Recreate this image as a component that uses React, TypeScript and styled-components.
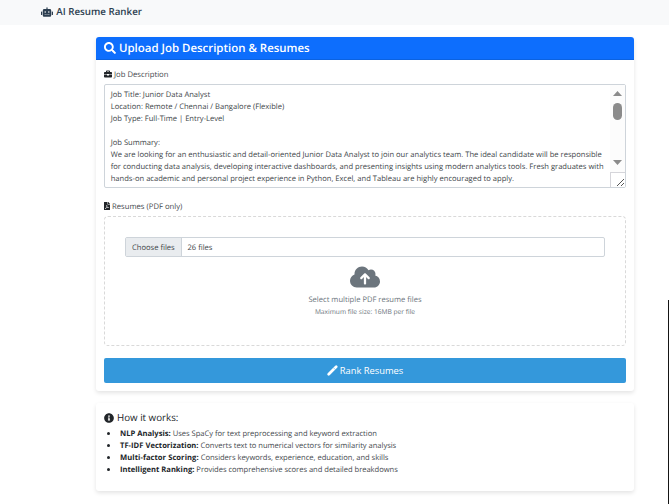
import React from 'react';
import styled, { createGlobalStyle } from 'styled-components';
import { FaRobot, FaSearch, FaBriefcase, FaFilePdf, FaInfoCircle } from 'react-icons/fa';
import { FaCloudArrowUp } from 'react-icons/fa6';

const GlobalStyle = createGlobalStyle`
  * { box-sizing: border-box; }
  body {
    margin: 0;
    background: #fff;
    color: #212529;
    font: 400 7.6px/12px "Open Sans", "Noto Sans", sans-serif;
    text-rendering: geometricPrecision;
    overflow: hidden;
  }
  svg { flex: none; }
`;

const Page = styled.div`
  position: relative;
  height: 504px;
`;

const WindowEdge = styled.div`
  position: absolute;
  right: 0;
  top: 300px;
  bottom: 0;
  width: 1px;
  background: #151515;
`;

const Navbar = styled.nav`
  display: flex;
  align-items: center;
  gap: 3.3px;
  height: 25px;
  padding: 0 0 1px 41px;
  background: #f8f9fa;
  color: #2c3e50;
  font-size: 9.75px;
  font-weight: 600;
`;

const Main = styled.main`
  display: flex;
  flex-direction: column;
  gap: 12px;
  width: 538px;
  margin: 12px 0 0 96px;
`;

const Card = styled.section<{ $height: number }>`
  height: ${(p) => p.$height}px;
  border-radius: 3px;
  background: #fff;
  box-shadow: 0 2px 4px rgba(0, 0, 0, 0.11);
`;

const CardHeader = styled.h1`
  display: flex;
  align-items: center;
  gap: 3px;
  height: 23px;
  margin: 0;
  padding: 2px 8px 0;
  border-bottom: 1px solid #0b62e0;
  border-radius: 3px 3px 0 0;
  background: #0d6efd;
  color: #fff;
  font-size: 11.45px;
  font-weight: 600;

  svg { margin-bottom: 2px; }
`;

const CardBody = styled.div`
  padding: 8px;
`;

const Label = styled.label`
  display: flex;
  align-items: center;
  gap: 2px;
  height: 12px;
  margin-bottom: 4px;
  padding-top: 1px;
  color: #45494e;
  font-size: 7.7px;

  svg {
    margin-bottom: 1px;
    color: #212529;
  }
`;

const PdfIcon = styled(FaFilePdf)`
  width: 6px;
  height: 8px;
`;

const TextBox = styled.div`
  display: grid;
  grid-template-columns: 1fr 15px;
  height: 104px;
  margin-bottom: 12px;
  border: 1px solid #ced4da;
  border-radius: 2px;
`;

const TextContent = styled.div`
  padding: 4px 0 0 5.7px;
  color: #404549;
  white-space: pre;
  overflow: hidden;
`;

const ScrollColumn = styled.div`
  display: flex;
  flex-direction: column;
  align-items: center;
  background: #fcfcfc;
`;

const Arrow = styled.div<{ $down?: boolean }>`
  width: 9px;
  height: 5px;
  margin-top: ${(p) => (p.$down ? 40 : 6)}px;
  background: #8b8b8b;
  clip-path: ${(p) => (p.$down ? 'polygon(0 0, 100% 0, 50% 100%)' : 'polygon(50% 0, 100% 100%, 0 100%)')};
`;

const Thumb = styled.div`
  width: 9px;
  height: 17px;
  margin-top: 7px;
  border-radius: 5px;
  background: #8b8b8b;
`;

const Resizer = styled.div`
  display: flex;
  align-items: flex-end;
  justify-content: flex-end;
  width: 15px;
  height: 15px;
  margin-top: auto;
  border-top: 1px solid #d5d5da;
  border-left: 1px solid #d5d5da;
  background: #fff;
`;

const DropZone = styled.div`
  display: flex;
  flex-direction: column;
  align-items: center;
  height: 130px;
  margin-bottom: 12px;
  padding: 20px;
  border: 1px dashed #d9d9d9;
  border-radius: 4px;
  color: #6c757d;
`;

const FileInput = styled.div`
  display: flex;
  align-self: stretch;
  height: 20px;
  margin-bottom: 5px;
  border: 1px solid #ced4da;
  border-radius: 2px;
  line-height: 20px;
  color: #404549;
`;

const FileButton = styled.span`
  height: 18px;
  width: 56px;
  padding-left: 6px;
  border-right: 1px solid #ced4da;
  background: #e9ecef;
`;

const FileCount = styled.span`
  padding-left: 5.5px;
`;

const Hint = styled.p`
  margin: 2px 0 0;
`;

const SmallHint = styled.small`
  font-size: 6.65px;
`;

const RankButton = styled.button`
  display: flex;
  align-items: center;
  justify-content: center;
  gap: 2px;
  width: 100%;
  height: 25px;
  padding: 0;
  border: 0;
  border-radius: 2px;
  background: #3498db;
  color: #fff;
  font: 400 9.35px/14px "Open Sans", "Noto Sans", sans-serif;
`;

const InfoTitle = styled.h2`
  display: flex;
  align-items: center;
  gap: 3px;
  height: 12px;
  margin: 0 0 5px;
  padding-top: 2px;
  font-size: 9.75px;
  font-weight: 500;

  svg { margin-bottom: 1px; }
`;

const InfoList = styled.ul`
  margin: 0;
  padding: 0;
  list-style: none;
  color: #45494e;
`;

const InfoItem = styled.li`
  display: flex;
  align-items: center;
  gap: 2px;
  height: 12px;
  letter-spacing: -0.035px;

  &::before {
    content: '';
    width: 3px;
    height: 3px;
    margin: 0 8px 2px 3px;
    border-radius: 50%;
    background: #212529;
  }
`;

const Term = styled.strong<{ $spacing?: number }>`
  color: #212529;
  font-weight: 700;
  letter-spacing: ${(p) => p.$spacing ?? 0}px;
`;

const jobText = `Job Title: Junior Data Analyst
Location: Remote / Chennai / Bangalore (Flexible)
Job Type: Full-Time | Entry-Level

Job Summary:
We are looking for an enthusiastic and detail-oriented Junior Data Analyst to join our analytics team. The ideal candidate will be responsible
for conducting data analysis, developing interactive dashboards, and presenting insights using modern analytics tools. Fresh graduates with
hands-on academic and personal project experience in Python, Excel, and Tableau are highly encouraged to apply.`;

const steps = [
  { term: 'NLP Analysis:', text: 'Uses SpaCy for text preprocessing and keyword extraction' },
  { term: 'TF-IDF Vectorization:', text: 'Converts text to numerical vectors for similarity analysis', spacing: 0.02 },
  { term: 'Multi-factor Scoring:', text: 'Considers keywords, experience, education, and skills', spacing: 0.06 },
  { term: 'Intelligent Ranking:', text: 'Provides comprehensive scores and detailed breakdowns' },
];

export default function App() {
  return (
    <Page>
      <GlobalStyle />
      <Navbar>
        <FaRobot size={12} />
        AI Resume Ranker
      </Navbar>
      <Main>
        <Card $height={354}>
          <CardHeader>
            <FaSearch size={12} />
            Upload Job Description &amp; Resumes
          </CardHeader>
          <CardBody>
            <Label>
              <FaBriefcase size={8} />
              Job Description
            </Label>
            <TextBox>
              <TextContent>{jobText}</TextContent>
              <ScrollColumn>
                <Arrow />
                <Thumb />
                <Arrow $down />
                <Resizer>
                  <svg width="9" height="9" viewBox="0 0 9 9" stroke="#444" strokeWidth="0.9">
                    <path d="M1 8 8 1M5 8 8 5" />
                  </svg>
                </Resizer>
              </ScrollColumn>
            </TextBox>
            <Label>
              <PdfIcon />
              Resumes (PDF only)
            </Label>
            <DropZone>
              <FileInput>
                <FileButton>Choose files</FileButton>
                <FileCount>26 files</FileCount>
              </FileInput>
              <FaCloudArrowUp size={30} />
              <Hint>Select multiple PDF resume files</Hint>
              <SmallHint>Maximum file size: 16MB per file</SmallHint>
            </DropZone>
            <RankButton>
              <svg width="11" height="11" viewBox="0 0 11 11" stroke="#fff" strokeLinecap="round">
                <path d="M1.7 9.3 9.2 1.8" strokeWidth="2.7" />
                <path d="M6.6 2.9 8.1 4.4" stroke="#3498db" strokeWidth="0.5" />
              </svg>
              Rank Resumes
            </RankButton>
          </CardBody>
        </Card>
        <Card $height={88}>
          <CardBody>
            <InfoTitle>
              <FaInfoCircle size={10} />
              How it works:
            </InfoTitle>
            <InfoList>
              {steps.map((s) => (
                <InfoItem key={s.term}>
                  <Term $spacing={s.spacing}>{s.term}</Term>
                  {s.text}
                </InfoItem>
              ))}
            </InfoList>
          </CardBody>
        </Card>
      </Main>
      <WindowEdge />
    </Page>
  );
}
